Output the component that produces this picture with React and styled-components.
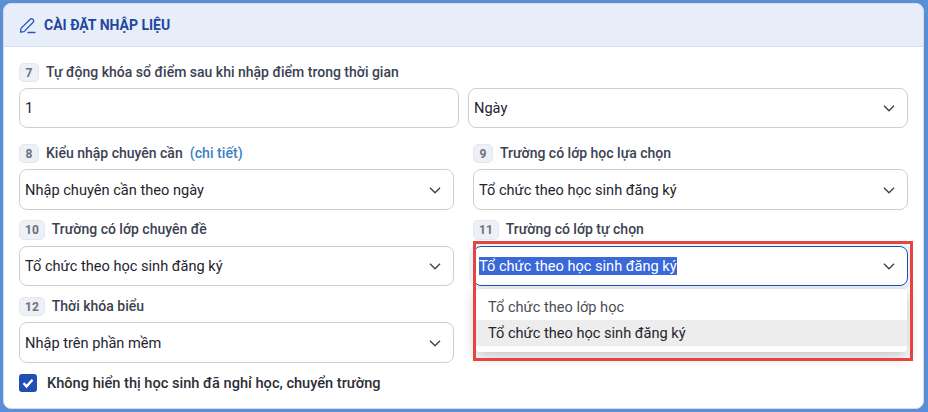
import React from "react";
import styled, { createGlobalStyle } from "styled-components";

const GlobalStyle = createGlobalStyle`
  html, body {
    margin: 0;
    padding: 0;
    background: #5a8fd8;
  }
  body {
    width: 928px;
    height: 412px;
    overflow: hidden;
    font-family: Roboto, "Noto Sans", sans-serif;
  }
`;

const Frame = styled.div`
  box-sizing: border-box;
  width: 928px;
  height: 412px;
  padding: 3px 4px 3px 3px;
  background: #5a8fd8;
`;

const Card = styled.section`
  box-sizing: border-box;
  height: 406px;
  background: #fff;
  border: 1px solid #d4dce8;
  border-radius: 8px;
  overflow: hidden;
`;

const Header = styled.header`
  display: flex;
  align-items: center;
  gap: 8px;
  height: 43px;
  box-sizing: border-box;
  padding: 0 16px 0 15px;
  background: #e8eef9;
  border-bottom: 1px solid #d6e0f5;
`;

const HeaderTitle = styled.h2`
  margin: 0;
  font-size: 14px;
  font-weight: 700;
  color: #1f479f;
`;

const Body = styled.div`
  display: flex;
  flex-direction: column;
  padding: 16px 15px 0 15px;
`;

const Row = styled.div`
  display: grid;
  grid-template-columns: 1fr 1fr;
  column-gap: ${(p) => p.$gap}px;
  margin-bottom: ${(p) => p.$mb}px;
`;

const Field = styled.div`
  position: relative;
  min-width: 0;
`;

const LabelRow = styled.div`
  display: flex;
  align-items: center;
  gap: 7px;
  height: ${(p) => p.$h || 19}px;
  margin-bottom: 6px;
  font-size: 14px;
  font-weight: 500;
  color: #3b4252;
`;

const LabelText = styled.span`
  padding-bottom: 2px;
`;

const Badge = styled.span`
  display: inline-flex;
  align-items: center;
  justify-content: center;
  box-sizing: border-box;
  min-width: 20px;
  height: 100%;
  padding: 0 5px;
  border-radius: 5px;
  background: #edf0f5;
  border: 1px solid #e3e7ee;
  font-size: 12px;
  font-weight: 700;
  color: #6b7280;
`;

const Detail = styled.a`
  padding-bottom: 2px;
  font-size: 14.2px;
  color: #3b82c4;
`;

const Control = styled.div`
  display: flex;
  align-items: center;
  justify-content: space-between;
  box-sizing: border-box;
  height: ${(p) => p.$h || 40}px;
  padding: 0 11px 0 5px;
  background: #fff;
  border: 1px solid ${(p) => (p.$focused ? "#1f4fb5" : "#cfcfcf")};
  border-radius: 8px;
  box-shadow: ${(p) => (p.$focused ? "0 0 0 4px #eef2fb" : "none")};
  font-size: 14.6px;
  color: #1f2530;
`;

const Selected = styled.span`
  background: #3a68d8;
  color: #fff;
  line-height: 18px;
`;

const Menu = styled.ul`
  position: absolute;
  z-index: 2;
  top: 69px;
  left: 3px;
  right: 1px;
  margin: 0;
  padding: 0 0 6px;
  list-style: none;
  background: #fff;
  border-radius: 4px;
  box-shadow: 0 4px 14px rgba(0, 0, 0, 0.25);
  font-size: 14.6px;
`;

const MenuItem = styled.li`
  display: flex;
  align-items: center;
  box-sizing: border-box;
  height: ${(p) => p.$h}px;
  padding: ${(p) => (p.$active ? "0" : "4px")} 0 0 12px;
  background: ${(p) => (p.$active ? "#ededed" : "transparent")};
  color: ${(p) => (p.$active ? "#22262e" : "#4a4e56")};
`;

const Highlight = styled.div`
  position: absolute;
  z-index: 3;
  top: 21px;
  left: 0;
  right: -5px;
  height: 120px;
  box-sizing: border-box;
  border: 3px solid #e5443f;
  pointer-events: none;
`;

const CheckRow = styled.label`
  display: flex;
  align-items: center;
  gap: 10px;
  margin-top: 11px;
  font-size: 14.6px;
  font-weight: 500;
  color: #2b2f38;
`;

const CheckBox = styled.span`
  display: inline-flex;
  align-items: center;
  justify-content: center;
  width: 18px;
  height: 18px;
  border-radius: 3px;
  background: #1f4fb5;
`;

const Chevron = () => (
  <svg width="14" height="14" viewBox="0 0 14 14" fill="none">
    <path d="M2 4.8 7 9.8 12 4.8" stroke="#3d4451" strokeWidth="1.4" />
  </svg>
);

const PenIcon = () => (
  <svg width="17" height="17" viewBox="0 0 17 17" fill="none" stroke="#2456b8" strokeWidth="1.3" strokeLinejoin="round" strokeLinecap="round">
    <path d="M1.5 15.2 2 11.4 11.2 2.2c.7-.7 1.7-.7 2.4 0l.6.6c.7.7.7 1.7 0 2.4L5 14.6Z" />
    <path d="M9 15.5h7" />
  </svg>
);

const Label = ({ n, h, children }) => (
  <LabelRow $h={h}>
    <Badge>{n}</Badge>
    <LabelText>{children}</LabelText>
  </LabelRow>
);

export default function App() {
  return (
    <Frame>
      <GlobalStyle />
      <Card>
        <Header>
          <PenIcon />
          <HeaderTitle>CÀI ĐẶT NHẬP LIỆU</HeaderTitle>
        </Header>
        <Body>
          <Row $gap={9} $mb={16}>
            <Field>
              <Label n="7">Tự động khóa sổ điểm sau khi nhập điểm trong thời gian</Label>
              <Control>1</Control>
            </Field>
            <Field>
              <LabelRow />
              <Control>
                Ngày
                <Chevron />
              </Control>
            </Field>
          </Row>
          <Row $gap={19} $mb={10}>
            <Field>
              <LabelRow>
                <Badge>8</Badge>
                <LabelText>Kiểu nhập chuyên cần</LabelText>
                <Detail>(chi tiết)</Detail>
              </LabelRow>
              <Control $h={41}>
                Nhập chuyên cần theo ngày
                <Chevron />
              </Control>
            </Field>
            <Field>
              <Label n="9">Trường có lớp học lựa chọn</Label>
              <Control $h={41}>
                Tổ chức theo học sinh đăng ký
                <Chevron />
              </Control>
            </Field>
          </Row>
          <Row $gap={19} $mb={11}>
            <Field>
              <Label n="10" h={20}>Trường có lớp chuyên đề</Label>
              <Control>
                Tổ chức theo học sinh đăng ký
                <Chevron />
              </Control>
            </Field>
            <Field>
              <Label n="11" h={20}>Trường có lớp tự chọn</Label>
              <Control $focused>
                <Selected>Tổ chức theo học sinh đăng ký</Selected>
                <Chevron />
              </Control>
              <Menu>
                <MenuItem $h={31}>Tổ chức theo lớp học</MenuItem>
                <MenuItem $h={26} $active>Tổ chức theo học sinh đăng ký</MenuItem>
              </Menu>
              <Highlight />
            </Field>
          </Row>
          <Row $gap={19} $mb={0}>
            <Field>
              <Label n="12">Thời khóa biểu</Label>
              <Control $h={41}>
                Nhập trên phần mềm
                <Chevron />
              </Control>
            </Field>
          </Row>
          <CheckRow>
            <CheckBox>
              <svg width="12" height="12" viewBox="0 0 12 12" fill="none">
                <path d="M1.5 6.2 4.6 9.4 10.5 2.8" stroke="#fff" strokeWidth="2.4" />
              </svg>
            </CheckBox>
            Không hiển thị học sinh đã nghỉ học, chuyển trường
          </CheckRow>
        </Body>
      </Card>
    </Frame>
  );
}
